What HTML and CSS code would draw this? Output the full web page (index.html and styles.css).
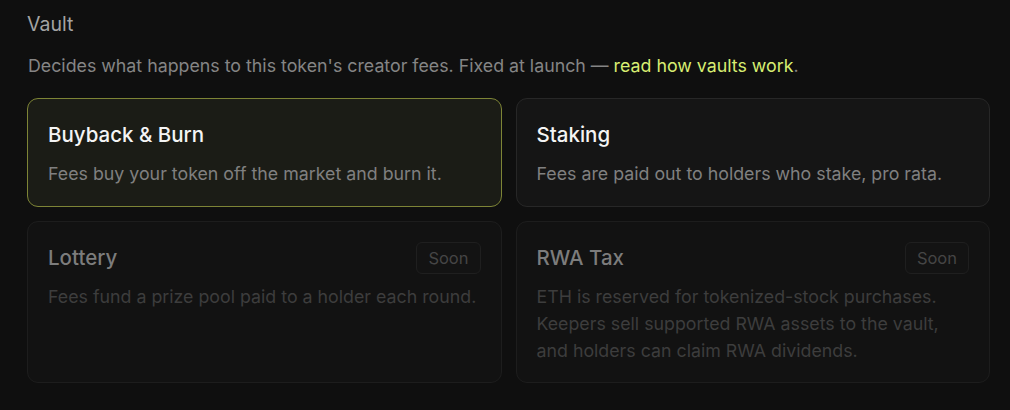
FILE: index.html
```html
<!DOCTYPE html>
<html lang="en">
<head>
    <meta charset="UTF-8">
    <meta name="viewport" content="width=device-width, initial-scale=1.0">
    <title>Vault</title>
    <link rel="stylesheet" href="styles.css">
</head>
<body>
    <section class="vault">
        <h2 class="vault-label">Vault</h2>
        <p class="vault-help">Decides what happens to this token's creator fees. Fixed at launch — <a href="#vaults">read how vaults work</a>.</p>

        <!-- vault options -->
        <div class="vault-grid">
            <div class="vault-card selected">
                <div class="card-head">
                    <h3>Buyback &amp; Burn</h3>
                </div>
                <p>Fees buy your token off the market and burn it.</p>
            </div>
            <div class="vault-card">
                <div class="card-head">
                    <h3>Staking</h3>
                </div>
                <p>Fees are paid out to holders who stake, pro rata.</p>
            </div>
            <div class="vault-card disabled">
                <div class="card-head">
                    <h3>Lottery</h3>
                    <span class="soon">Soon</span>
                </div>
                <p>Fees fund a prize pool paid to a holder each round.</p>
            </div>
            <div class="vault-card disabled">
                <div class="card-head">
                    <h3>RWA Tax</h3>
                    <span class="soon">Soon</span>
                </div>
                <p>ETH is reserved for tokenized-stock purchases. Keepers sell supported RWA assets to the vault, and holders can claim RWA dividends.</p>
            </div>
        </div>
    </section>
</body>
</html>
```

FILE: styles.css
```css
body {
    margin: 0;
    padding: 0;
    background: #0f0f0f;
    font-family: Inter, "Noto Sans", sans-serif;
}

.vault {
    padding: 10px 20px 0 27px;
}

.vault-label {
    margin: 0;
    font-size: 19.5px;
    line-height: 28px;
    font-weight: 400;
    color: #a3a3a3;
}

.vault-help {
    margin: 15px 0 0 1px;
    font-size: 17.8px;
    line-height: 26.7px;
    color: #858585;
}
.vault-help a {
    color: #d8ee72;
    text-decoration: none;
}

.vault-grid {
    display: grid;
    grid-template-columns: 1fr 1fr;
    gap: 14px;
    width: 963px;
    margin-top: 18px;
}

.vault-card {
    background: #151515;
    border: 1px solid #272727;
    border-radius: 11px;
    padding: 22px 20px 19px;
}
.vault-card.selected {
    background: #1b1c16;
    border-color: #7d8436;
}

.card-head {
    display: flex;
    align-items: center;
    justify-content: space-between;
    min-height: 28px;
}
.card-head h3 {
    margin: 0;
    font-size: 20.5px;
    line-height: 28px;
    font-weight: 500;
    color: #f4f4f4;
}

.vault-card p {
    margin: 12px 0 0;
    font-size: 17.8px;
    line-height: 26.7px;
    color: #808080;
}

/* coming soon options */
.vault-card.disabled {
    background: #121212;
    border-color: #1d1d1d;
    padding: 20px 20px 17px;
}
.vault-card.disabled h3 {
    color: #7c7c7c;
}
.vault-card.disabled p {
    color: #3d3d3d;
    margin-top: 10px;
}

.soon {
    box-sizing: border-box;
    height: 32px;
    padding: 0 11px;
    border: 1px solid #1f1f1f;
    border-radius: 6px;
    background: #131313;
    color: #454545;
    font-size: 16.5px;
    line-height: 30px;
}
```
